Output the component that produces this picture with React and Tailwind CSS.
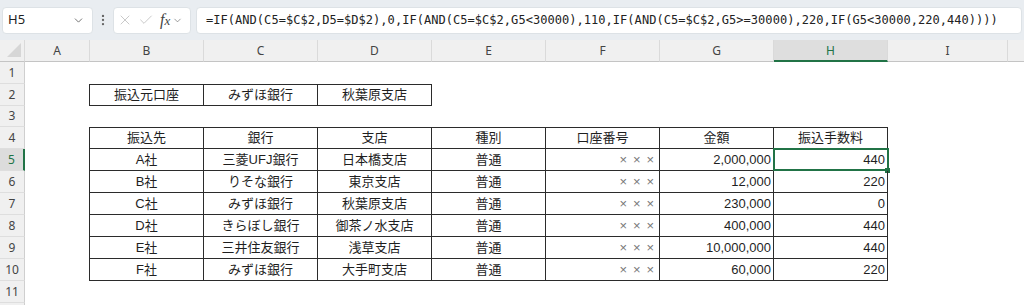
import React from 'react';
import { ChevronDown, X, Check, EllipsisVertical } from 'lucide-react';

const cellFont = { fontFamily: '"Liberation Sans", "Noto Sans CJK JP", sans-serif' };
const uiFont = { fontFamily: '"Noto Sans", "Liberation Sans", sans-serif' };

const HEAD = ['振込先', '銀行', '支店', '種別', '口座番号', '金額', '振込手数料'];
const DATA = [
  ['A社', '三菱UFJ銀行', '日本橋支店', '普通', '2,000,000', '440'],
  ['B社', 'りそな銀行', '東京支店', '普通', '12,000', '220'],
  ['C社', 'みずほ銀行', '秋葉原支店', '普通', '230,000', '0'],
  ['D社', 'きらぼし銀行', '御茶ノ水支店', '普通', '400,000', '440'],
  ['E社', '三井住友銀行', '浅草支店', '普通', '10,000,000', '440'],
  ['F社', 'みずほ銀行', '大手町支店', '普通', '60,000', '220'],
];

function RowHead({ n, selected, h }) {
  return (
    <div
      className={`${h} w-[25px] shrink-0 flex items-center justify-center border-b border-[#dedede] text-[12px] ${
        selected
          ? 'bg-[#dcdcdc] text-[#217346] border-r-2 border-r-[#217346]'
          : 'bg-[#f0f0f0] text-[#444] border-r border-r-[#cfcfcf]'
      }`}
      style={uiFont}
    >
      {n}
    </div>
  );
}

function Xs() {
  return (
    <div className="flex justify-end pr-[2px] text-[#777] text-[13px]">
      <span className="w-[13.5px] text-center">×</span>
      <span className="w-[13.5px] text-center">×</span>
      <span className="w-[13.5px] text-center">×</span>
    </div>
  );
}

export default function App() {
  const colHeads = ['B', 'C', 'D', 'E', 'F', 'G', 'H'];
  return (
    <div className="w-[1024px] h-[305px] overflow-hidden bg-white text-[#222]">
      {/* Formula bar */}
      <div className="h-[40px] bg-[#e9edf1] flex items-center pl-[2px] pr-[2px]">
        <div className="w-[91px] h-[27px] bg-white rounded-[4px] border border-[#dde2e6] flex items-center justify-between pl-[5px] pr-[7px]">
          <span className="text-[13px] text-[#222]" style={uiFont}>H5</span>
          <ChevronDown size={13} strokeWidth={1.5} className="text-[#555]" />
        </div>
        <div className="w-[20px] flex justify-center text-[#666]">
          <EllipsisVertical size={14} strokeWidth={2} />
        </div>
        <div className="w-[78px] h-[27px] bg-white rounded-[4px] border border-[#dde2e6] flex items-center pl-[3px]">
          <X size={16} strokeWidth={1.1} className="text-[#b5b5b5]" />
          <Check size={16} strokeWidth={1.1} className="text-[#b5b5b5] ml-[5px]" />
          <span className="ml-[6px] text-[16px] italic text-[#444] leading-none" style={{ fontFamily: '"Liberation Serif", serif' }}>
            f<span className="text-[13px]">x</span>
          </span>
          <ChevronDown size={11} strokeWidth={1.4} className="text-[#666] ml-[2px]" />
        </div>
        <div className="flex-1 ml-[5px] h-[27px] bg-white rounded-[4px] border border-[#dde2e6] flex items-center pl-[9px] overflow-hidden whitespace-nowrap">
          <span className="text-[12px] tracking-[0.04px] text-[#222]" style={{ fontFamily: '"DejaVu Sans Mono", "Liberation Mono", monospace' }}>
            =IF(AND(C5=$C$2,D5=$D$2),0,IF(AND(C5=$C$2,G5&lt;30000),110,IF(AND(C5=$C$2,G5&gt;=30000),220,IF(G5&lt;30000,220,440))))
          </span>
        </div>
      </div>

      {/* Column headers */}
      <div className="h-[22px] flex bg-[#f0f0f0] text-[12px] text-[#444]" style={uiFont}>
        <div className="w-[25px] shrink-0 border-r border-b border-r-[#dadada] border-b-[#c4c4c4] relative">
          <svg width="25" height="22" className="absolute left-0 top-0">
            <polygon points="21,3 21,17 7,17" fill="#d6d6d6" />
          </svg>
        </div>
        <div className="w-[65px] shrink-0 flex items-center justify-center border-r border-b border-r-[#dadada] border-b-[#c4c4c4]">A</div>
        {colHeads.map((c) =>
          c === 'H' ? (
            <div key={c} className="w-[114px] shrink-0 flex items-center justify-center bg-[#dedede] text-[#217346] border-r border-r-[#dadada] border-b-2 border-b-[#217346] pt-[1px]">
              {c}
            </div>
          ) : (
            <div key={c} className="w-[114px] shrink-0 flex items-center justify-center border-r border-b border-r-[#dadada] border-b-[#c4c4c4]">
              {c}
            </div>
          )
        )}
        <div className="w-[120px] shrink-0 flex items-center justify-center border-r border-b border-r-[#dadada] border-b-[#c4c4c4]">I</div>
        <div className="flex-1 border-b border-b-[#c4c4c4]" />
      </div>

      {/* Sheet */}
      <div className="text-[13px] text-[#1f1f1f]" style={cellFont}>
        <div className="flex h-[22px]">
          <RowHead n="1" h="h-[22px]" />
        </div>
        <div className="flex h-[22px]">
          <RowHead n="2" h="h-[22px]" />
          <div className="w-[65px] shrink-0 border-r border-[#2b2b2b]" />
          <div className="w-[114px] shrink-0 flex items-center justify-center border-r border-t border-b border-[#2b2b2b]">振込元口座</div>
          <div className="w-[114px] shrink-0 flex items-center justify-center border-r border-t border-b border-[#2b2b2b]">みずほ銀行</div>
          <div className="w-[114px] shrink-0 flex items-center justify-center border-r border-t border-b border-[#2b2b2b]">秋葉原支店</div>
        </div>
        <div className="flex h-[21px]">
          <RowHead n="3" h="h-[21px]" />
        </div>
        <div className="flex h-[22px]">
          <RowHead n="4" h="h-[22px]" />
          <div className="w-[65px] shrink-0 border-r border-[#2b2b2b]" />
          {HEAD.map((t) => (
            <div key={t} className="w-[114px] shrink-0 flex items-center justify-center border-r border-t border-b border-[#2b2b2b]">
              {t}
            </div>
          ))}
        </div>
        {DATA.map((r, i) => (
          <div key={i} className="flex h-[22px]">
            <RowHead n={String(i + 5)} h="h-[22px]" selected={i === 0} />
            <div className="w-[65px] shrink-0 border-r border-[#2b2b2b]" />
            <div className="w-[114px] shrink-0 flex items-center justify-center border-r border-b border-[#2b2b2b]">{r[0]}</div>
            <div className="w-[114px] shrink-0 flex items-center justify-center border-r border-b border-[#2b2b2b]">{r[1]}</div>
            <div className="w-[114px] shrink-0 flex items-center justify-center border-r border-b border-[#2b2b2b]">{r[2]}</div>
            <div className="w-[114px] shrink-0 flex items-center justify-center border-r border-b border-[#2b2b2b]">{r[3]}</div>
            <div className="w-[114px] shrink-0 flex items-center justify-end border-r border-b border-[#2b2b2b]">
              <Xs />
            </div>
            <div className="w-[114px] shrink-0 flex items-center justify-end pr-[2px] border-r border-b border-[#2b2b2b]">{r[4]}</div>
            <div className="w-[114px] shrink-0 flex items-center justify-end pr-[2px] border-r border-b border-[#2b2b2b] relative">
              {r[5]}
              {i === 0 && (
                <>
                  <div className="absolute -left-[1px] -top-[1px] -right-[2px] -bottom-[1px] border-2 border-[#217346]" />
                  <div className="absolute -right-[3px] -bottom-[3px] w-[5px] h-[5px] bg-[#217346]" />
                </>
              )}
            </div>
          </div>
        ))}
        <div className="flex h-[22px]">
          <RowHead n="11" h="h-[22px]" />
        </div>
        <div className="flex h-[22px]">
          <RowHead n="" h="h-[22px]" />
        </div>
      </div>
    </div>
  );
}
